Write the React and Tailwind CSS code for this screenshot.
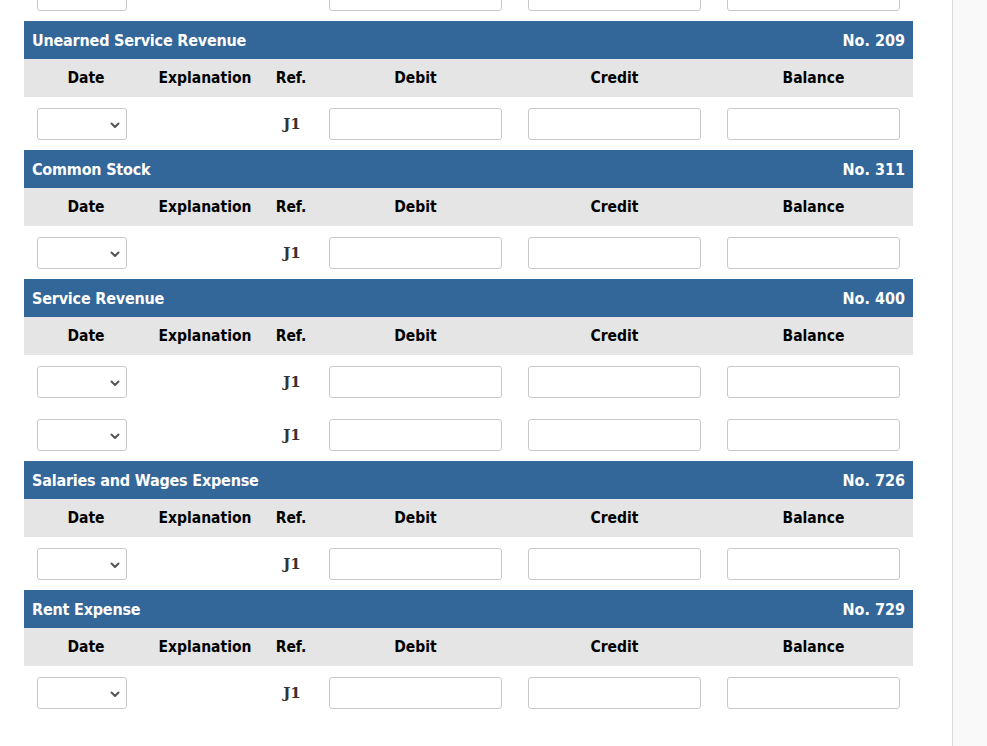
import React from 'react';

const accounts = [
  { name: 'Unearned Service Revenue', no: 209, rows: 1 },
  { name: 'Common Stock', no: 311, rows: 1 },
  { name: 'Service Revenue', no: 400, rows: 2 },
  { name: 'Salaries and Wages Expense', no: 726, rows: 1 },
  { name: 'Rent Expense', no: 729, rows: 1 },
];

const cols = 'grid grid-cols-[124px_116px_52px_199px_199px_199px]';

function Chevron() {
  return (
    <svg width="12" height="12" viewBox="0 0 12 12" className="absolute right-[5px] top-[10px]">
      <path d="M2.5 4.5 L6 8 L9.5 4.5" fill="none" stroke="#555" strokeWidth="2" strokeLinecap="round" strokeLinejoin="round" />
    </svg>
  );
}

function Row({ hideRef }) {
  return (
    <div className={`${cols} h-[53px] items-center`}>
      <div className="pl-[13px]">
        <div className="relative w-[90px] h-[32px] border border-[#c8c8c8] rounded-[3px] bg-white">
          <Chevron />
        </div>
      </div>
      <div />
      <div className="text-center font-bold text-[15px] text-[#333] pt-[1px] pl-[4px]" style={{ fontFamily: '"DejaVu Serif", serif' }}>
        {hideRef ? '' : 'J1'}
      </div>
      {[0, 1, 2].map((i) => (
        <div key={i} className="flex justify-center">
          <input className="w-[173px] h-[32px] border border-[#c8c8c8] rounded-[3px] bg-white outline-none" />
        </div>
      ))}
    </div>
  );
}

function Account({ a }) {
  return (
    <div>
      <div className="h-[38px] bg-[#336699] text-white font-bold text-[16px] flex items-center justify-between pl-[8px] pr-[8px] pt-[1px]">
        <span className="tracking-[-0.2px]">{a.name}</span>
        <span>No. {a.no}</span>
      </div>
      <div className={`${cols} h-[38px] items-center bg-[#e5e5e5] font-bold text-[15.5px] text-black pt-[1px]`}>
        <div className="text-center">Date</div>
        <div className="text-center pr-[2px]">Explanation</div>
        <div className="text-center pl-[2px]">Ref.</div>
        <div className="text-center">Debit</div>
        <div className="text-center">Credit</div>
        <div className="text-center">Balance</div>
      </div>
      {Array.from({ length: a.rows }).map((_, i) => (
        <Row key={i} />
      ))}
    </div>
  );
}

export default function App() {
  return (
    <div className="flex h-[746px] overflow-hidden bg-white" style={{ fontFamily: '"DejaVu Sans Condensed", "DejaVu Sans", sans-serif' }}>
      <div className="w-[952px] shrink-0">
        <div className="-mt-[32px] ml-[24px] w-[889px]">
          <Row hideRef />
          {accounts.map((a) => (
            <Account key={a.no} a={a} />
          ))}
        </div>
      </div>
      <div className="flex-1 border-l border-[#dcdcdc] bg-[#f9f9f9]" />
    </div>
  );
}
